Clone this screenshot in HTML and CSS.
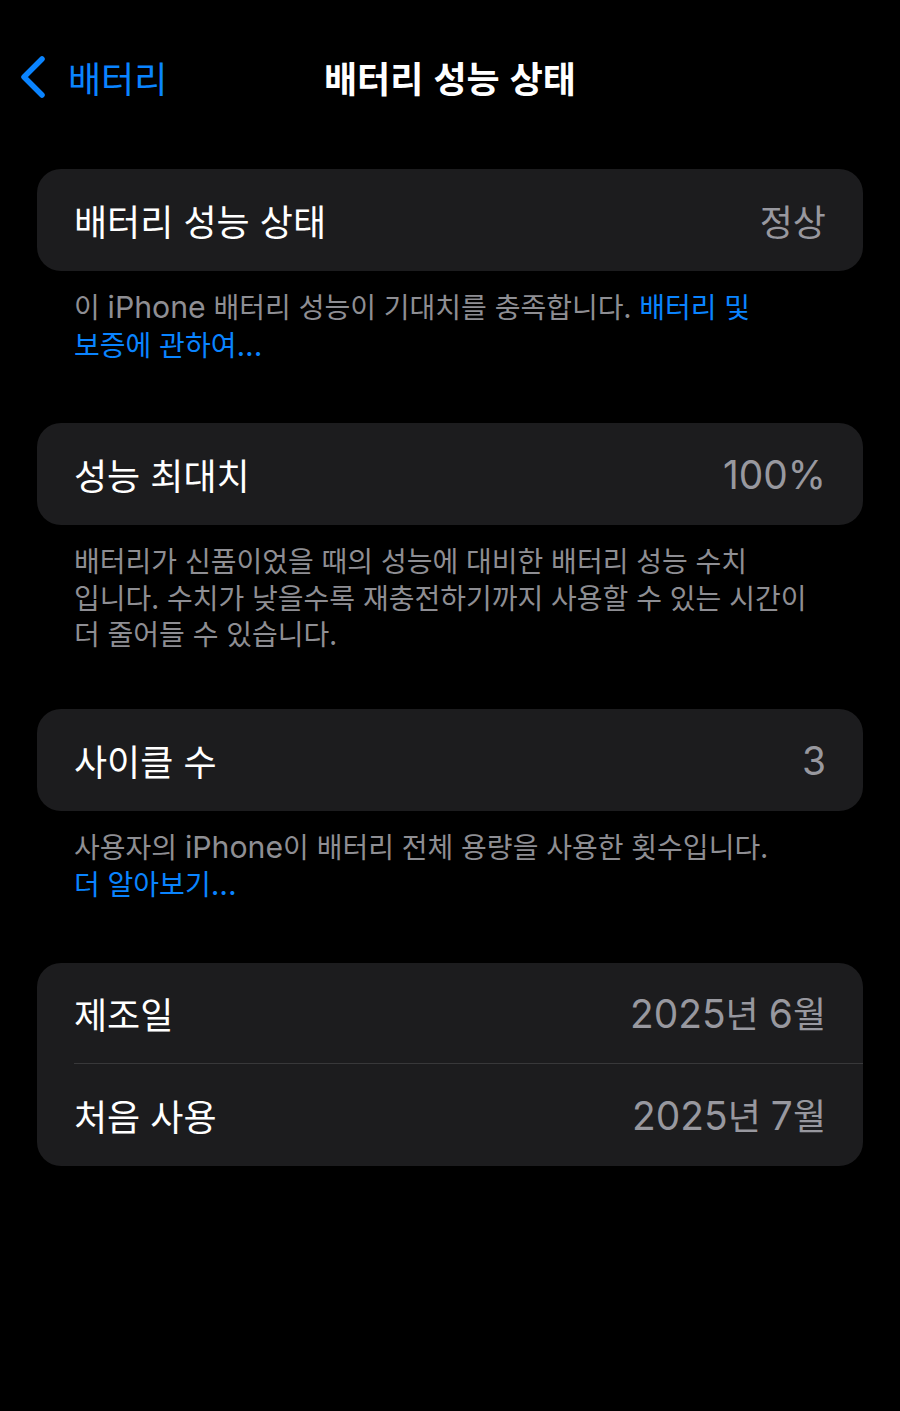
FILE: index.html
```html
<!DOCTYPE html>
<html lang="ko">
<head>
<meta charset="utf-8">
<title>배터리 성능 상태</title>
<link rel="stylesheet" href="styles.css">
</head>
<body>
<header class="nav">
  <a class="back" href="#">
    <svg class="chev" width="28" height="44" viewBox="0 0 28 44" aria-hidden="true">
      <polyline points="23,4 5,22 23,40" fill="none" stroke="#0a84ff" stroke-width="5.5" stroke-linecap="round" stroke-linejoin="round"/>
    </svg>
    <span class="back-label">배터리</span>
  </a>
  <h1 class="title">배터리 성능 상태</h1>
  <div class="nav-spacer"></div>
</header>

<main class="content">
  <section class="group group-a">
    <div class="card">
      <div class="row"><span class="label">배터리 성능 상태</span><span class="value">정상</span></div>
    </div>
    <p class="footer">이 <span class="en">iPhone</span> 배터리 성능이 기대치를 충족합니다. <a class="link" href="#">배터리 및<br>보증에 관하여<span class="en">...</span></a></p>
  </section>

  <section class="group group-b">
    <div class="card">
      <div class="row"><span class="label">성능 최대치</span><span class="value"><span class="en">100%</span></span></div>
    </div>
    <p class="footer">배터리가 신품이었을 때의 성능에 대비한 배터리 성능 수치<br>입니다. 수치가 낮을수록 재충전하기까지 사용할 수 있는 시간이<br>더 줄어들 수 있습니다.</p>
  </section>

  <section class="group group-a">
    <div class="card">
      <div class="row"><span class="label">사이클 수</span><span class="value"><span class="en">3</span></span></div>
    </div>
    <p class="footer">사용자의 <span class="en">iPhone</span>이 배터리 전체 용량을 사용한 횟수입니다.<br><a class="link" href="#">더 알아보기<span class="en">...</span></a></p>
  </section>

  <section class="group">
    <div class="card">
      <div class="row row-first"><span class="label">제조일</span><span class="value"><span class="en">2025</span>년 <span class="en">6</span>월</span></div>
      <div class="divider"></div>
      <div class="row"><span class="label">처음 사용</span><span class="value"><span class="en">2025</span>년 <span class="en">7</span>월</span></div>
    </div>
  </section>
</main>
</body>
</html>
```

FILE: styles.css
```css
* { box-sizing: border-box; }

html, body {
  margin: 0;
  padding: 0;
  background: #000;
}

body {
  width: 900px;
  min-height: 1411px;
  font-family: "Noto Sans CJK KR", "Noto Sans", sans-serif;
  color: #fff;
}

.en {
  font-family: Inter, "Noto Sans", sans-serif;
  font-size: 1.08em;
}

.nav {
  height: 154px;
  display: grid;
  grid-template-columns: 1fr auto 1fr;
  align-items: center;
}

.back {
  display: flex;
  align-items: center;
  gap: 21px;
  padding-left: 19px;
  text-decoration: none;
  color: #0a84ff;
}

.chev { display: block; }

.back-label {
  font-size: 36px;
  line-height: 40px;
}

.title {
  margin: 0;
  font-size: 36px;
  line-height: 40px;
  font-weight: 700;
  color: #fff;
}

.content {
  padding: 15px 37px 0;
}

.group-a { margin-bottom: 60px; }
.group-b { margin-bottom: 57px; }

.card {
  background: #1c1c1e;
  border-radius: 24px;
  overflow: hidden;
}

.row {
  height: 102px;
  display: flex;
  align-items: center;
  justify-content: space-between;
  padding: 0 37px;
}

.row-first { height: 100px; }

.label {
  font-size: 36px;
  line-height: 40px;
  color: #fff;
}

.value {
  font-size: 36px;
  line-height: 40px;
  color: #98989f;
}

.divider {
  height: 1px;
  margin-left: 37px;
  background: #38383a;
}

.footer {
  margin: 0;
  padding: 17px 37px 0;
  font-size: 28px;
  line-height: 36.5px;
  color: #8e8e93;
  white-space: nowrap;
}

.link {
  color: #0a84ff;
  text-decoration: none;
}
```
